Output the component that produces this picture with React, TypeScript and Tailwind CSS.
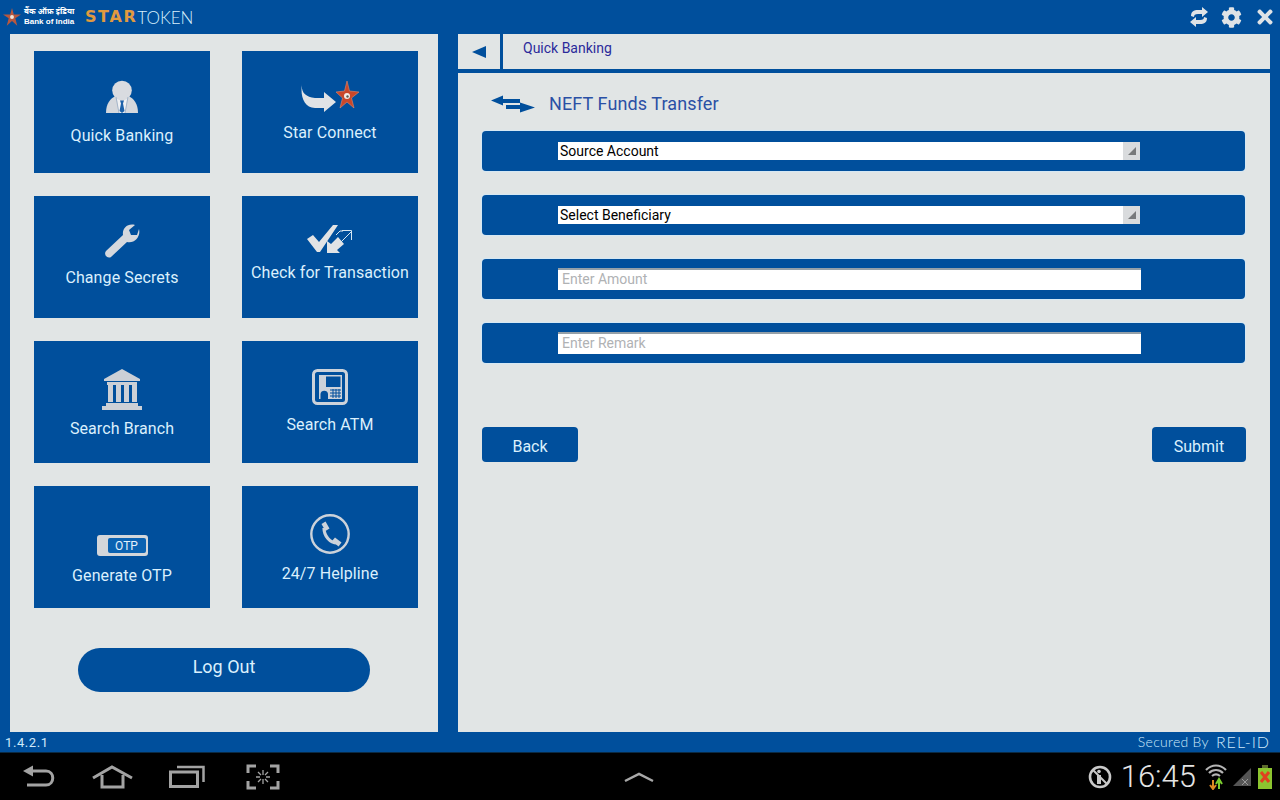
import React from "react";
import { FaCog, FaTimes } from "react-icons/fa";

const roboto = "font-['Roboto',sans-serif]";

function Star({ size = 24, fill = "#c8452b" }: { size?: number; fill?: string }) {
  return (
    <svg width={size} height={size} viewBox="0 0 24 24" className="shrink-0">
      <path d="M12 0 L14.4 8.6 L24 8.8 L16.4 13.8 L19 23.5 L12 17.4 L5 23.5 L7.6 13.8 L0 8.8 L9.6 8.6 Z" fill={fill} />
      <circle cx="12" cy="12" r="2.6" fill="#f1e4dc" />
    </svg>
  );
}

const PersonIcon = () => (
  <svg width="34" height="34" viewBox="0 0 34 34">
    <path d="M1 33 C1 24 5 18 11 16 H23 C29 18 33 24 33 33 Z" fill="#d5d8dd" />
    <circle cx="17" cy="10.5" r="9.8" fill="#d9dbe0" />
    <path d="M12 19 L17 21 L22 19 L20 33 H14 Z" fill="#f0f1f3" />
    <path d="M15 20.5 H19 L18 23.5 L19.5 31 L17 33 L14.5 31 L16 23.5 Z" fill="#1d62aa" />
    <path d="M11 17 L14 33 M23 17 L20 33" stroke="#8ea5c0" strokeWidth="0.7" />
  </svg>
);

const ConnectIcon = () => (
  <svg width="58" height="32" viewBox="0 0 58 32">
    <path d="M1 3 C0 11 4 16 14 17 L23 17 L23 11 L35 21 L23 31 L23 27 L14 27 C3 27 -1 15 1 3 Z" fill="#e0e3e6" />
    <path d="M46 0 L48.5 10 L58 11 L50.5 17 L53 27 L46 21 L39 27 L41.5 17 L35 11 L43.5 10 Z" fill="#c9472a" stroke="#e58a6a" strokeWidth="0.6" />
    <circle cx="46" cy="15" r="3" fill="#f3ece6" />
    <circle cx="46.5" cy="15.5" r="1.2" fill="#5a5a50" />
  </svg>
);

const WrenchIcon = () => (
  <svg width="36" height="34" viewBox="0 0 36 34">
    <path d="M2 27 L19 11 C18 5 23 -1 31 1 L25 6 L27 11 L33 11 L35 5 C37 13 30 20 23 18 L7 33 C4 35 -1 31 2 27 Z" fill="#d5d8dd" />
  </svg>
);

const CheckIcon = () => (
  <svg width="46" height="30" viewBox="0 0 46 30">
    <path d="M0 15 L6 11 L12 18 L26 1 L31 1 L13 28 L10 28 Z" fill="#e1e3e5" />
    <path d="M20 29 L20 17 L24 20 L31 13 L37 20 L30 26 L33 29 Z" fill="#e1e3e5" />
    <path d="M33 19 L44 8 M35 6.5 L44.5 6.5 L44.5 16 M29 11 L33 7 L36 7" stroke="#d5e6f2" strokeWidth="1" fill="none" />
  </svg>
);

const BankIcon = () => (
  <svg width="40" height="41" viewBox="0 0 40 41">
    <path d="M20 0 L38 10 L38 12 L2 12 L2 10 Z" fill="#ccd0d6" />
    <path d="M5 13 H35 V16 H5 Z" fill="#ccd0d6" />
    <path d="M6 16 H11 V33 H6 Z M14 16 H19 V33 H14 Z M22 16 H27 V33 H22 Z M30 16 H35 V33 H30 Z" fill="#ccd0d6" />
    <path d="M4 34 H36 V37 H40 V41 H0 V37 H4 Z" fill="#ccd0d6" />
  </svg>
);

const AtmIcon = () => (
  <svg width="36" height="36" viewBox="0 0 36 36">
    <rect x="1.5" y="1.5" width="33" height="33" rx="4" fill="none" stroke="#ccd2da" strokeWidth="3" />
    <path d="M7 6 H30 V30 H7 Z" fill="#ccd2da" />
    <rect x="14" y="7.5" width="14.5" height="10.5" fill="#004f9c" />
    <path d="M8.5 30 V25 C8.5 20.5 16 20.5 16 25 V30 Z" fill="#004f9c" />
    <path d="M18 21 H29 M18 24 H29 M18 27 H29" stroke="#004f9c" strokeWidth="1.1" />
    <path d="M21 20 V29 M24 20 V29 M27 20 V29" stroke="#004f9c" strokeWidth="1" />
  </svg>
);

const OtpIcon = () => (
  <div className={`w-[51px] h-[21px] rounded-[3px] bg-[#d3d6da] flex items-center justify-end pr-[1px] ${roboto}`}>
    <div className="w-[38px] h-[15px] rounded-[2px] bg-[#0a62b2] mr-[1px] flex items-center justify-center text-[12px] leading-none text-[#e4f1fb]">OTP</div>
  </div>
);

const PhoneIcon = () => (
  <svg width="40" height="40" viewBox="0 0 40 40">
    <circle cx="20" cy="20" r="18.7" fill="none" stroke="#ccd2da" strokeWidth="2.4" />
    <path d="M14 14 C14 22 20 29 27 29" fill="none" stroke="#ccd2da" strokeWidth="3.2" />
    <path d="M11.5 10 L15.5 7.5 L19.5 14.5 L15.5 17 Z" fill="#ccd2da" />
    <path d="M22 27 L25 23.5 L31.5 28.5 L28.5 32.5 Z" fill="#ccd2da" />
  </svg>
);

function Tile({ label, pt, mt, icon }: { label: string; pt: string; mt: string; icon: React.ReactNode }) {
  return (
    <div className={`h-[122px] bg-[#004f9c] flex flex-col items-center ${pt}`}>
      <div className="flex justify-center">{icon}</div>
      <div className={`${mt} text-[16px] leading-[20px] tracking-[0.1px] text-[#dbf0fd] whitespace-nowrap ${roboto}`}>{label}</div>
    </div>
  );
}

function Row({ children }: { children: React.ReactNode }) {
  return (
    <div className="h-[40px] rounded-[4px] bg-[#004f9c] shadow-[0_0_1px_1px_#d4e8f5] pl-[76px] flex items-center">{children}</div>
  );
}

function Select({ label }: { label: string }) {
  return (
    <div className={`w-[582px] h-[18px] bg-white flex items-center justify-between pl-[2px] text-[14px] text-black ${roboto}`}>
      <span>{label}</span>
      <div className="w-[17px] h-[18px] bg-[#d9dbdd] flex items-center justify-center">
        <svg width="10" height="10" viewBox="0 0 10 10"><path d="M9 1 V9 H1 Z" fill="#77797b" /></svg>
      </div>
    </div>
  );
}

function Input({ placeholder }: { placeholder: string }) {
  return (
    <div className={`w-[583px] h-[22px] mb-[1px] bg-white border-t-2 border-t-[#95a0a8] flex items-center pl-[4px] text-[14px] text-[#b0b2b4] ${roboto}`}>
      {placeholder}
    </div>
  );
}

export default function App() {
  return (
    <div className="w-[1280px] h-[800px] overflow-hidden flex flex-col bg-[#004f9c]">
      <header className="h-[34px] flex items-center justify-between pl-[3px] pr-[4px]">
        <div className="flex items-center">
          <Star size={18} fill="#b8583f" />
          <div className="ml-[3px] w-[60px] font-['Liberation_Sans','Noto_Sans',sans-serif] text-white">
            <div className="text-[8px] leading-[10px] font-bold whitespace-nowrap">बैंक ऑफ़ इंडिया</div>
            <div className="text-[8px] leading-[10px] font-bold whitespace-nowrap">Bank of India</div>
          </div>
          <span className="ml-[1px] font-['DejaVu_Sans',sans-serif] font-bold text-[16px] leading-none text-[#e09a3f] tracking-[1.6px]">STAR</span>
          <span className="font-['Lato',sans-serif] font-light text-[17px] leading-none text-[#d8effc]">TOKEN</span>
        </div>
        <div className="flex items-center gap-[12px] text-[#dfe3e6]">
          <svg width="20" height="20" viewBox="0 0 20 20">
            <path d="M2 9 C2 3 7 3 10 3 L13 3 L13 0 L19 5 L13 10 L13 7 L9 7 C6 7 5 8 5 10 Z" fill="#dfe3e6" />
            <path d="M18 11 C18 17 13 17 10 17 L7 17 L7 20 L1 15 L7 10 L7 13 L11 13 C14 13 15 12 15 10 Z" fill="#dfe3e6" />
          </svg>
          <FaCog size={21} />
          <FaTimes size={22} />
        </div>
      </header>

      <main className="h-[698px] flex gap-[20px] px-[10px]">
        <section className="w-[428px] bg-[#e1e5e5] px-[24px] pt-[17px]">
          <div className="grid grid-cols-[176px_176px] gap-x-[32px] gap-y-[23px]">
            <Tile label="Quick Banking" pt="pt-[29px]" mt="mt-[12px]" icon={<PersonIcon />} />
            <Tile label="Star Connect" pt="pt-[30px]" mt="mt-[10px]" icon={<ConnectIcon />} />
            <Tile label="Change Secrets" pt="pt-[28px]" mt="mt-[10px]" icon={<WrenchIcon />} />
            <Tile label="Check for Transaction" pt="pt-[28px]" mt="mt-[9px]" icon={<CheckIcon />} />
            <Tile label="Search Branch" pt="pt-[28px]" mt="mt-[9px]" icon={<BankIcon />} />
            <Tile label="Search ATM" pt="pt-[28px]" mt="mt-[10px]" icon={<AtmIcon />} />
            <Tile label="Generate OTP" pt="pt-[49px]" mt="mt-[10px]" icon={<OtpIcon />} />
            <Tile label="24/7 Helpline" pt="pt-[28px]" mt="mt-[10px]" icon={<PhoneIcon />} />
          </div>
          <div className={`mt-[40px] mx-[44px] h-[44px] rounded-full bg-[#004f9c] flex justify-center pt-[8px] text-[18px] leading-[22px] text-[#dbf0fd] ${roboto}`}>
            Log Out
          </div>
        </section>

        <section className="w-[812px] bg-[#e1e5e5] flex flex-col">
          <div className="h-[39px] flex border-b-[4px] border-b-[#004f9c]">
            <div className="w-[45px] border-r-[3px] border-r-[#004f9c] flex items-center justify-center">
              <svg width="14" height="12" viewBox="0 0 14 12"><path d="M0 6 L14 0 V12 Z" fill="#004f9c" /></svg>
            </div>
            <div className={`pl-[20px] pt-[4px] text-[14px] leading-[20px] text-[#2b2a9b] ${roboto}`}>Quick Banking</div>
          </div>
          <div className="h-[58px] flex items-center pl-[32px] pt-[4px]">
            <svg width="46" height="18" viewBox="0 0 46 18">
              <path d="M1 5.5 L13 0.5 V4 H30 V8 H13 V10.5 Z" fill="#004f9c" />
              <path d="M45 12.5 L30 17.5 V14 H16 V10 H30 V7.5 Z" fill="#004f9c" />
            </svg>
            <span className={`ml-[13px] text-[18px] leading-[24px] tracking-[0.1px] text-[#2a50a5] ${roboto}`}>NEFT Funds Transfer</span>
          </div>
          <div className="mx-[24px] flex flex-col gap-[24px] w-[763px]">
            <Row><Select label="Source Account" /></Row>
            <Row><Select label="Select Beneficiary" /></Row>
            <Row><Input placeholder="Enter Amount" /></Row>
            <Row><Input placeholder="Enter Remark" /></Row>
          </div>
          <div className={`mt-[64px] mx-[24px] w-[764px] flex justify-between text-[16px] text-[#dbf0fd] ${roboto}`}>
            <div className="w-[96px] h-[35px] rounded-[4px] bg-[#004f9c] flex items-center justify-center pt-[5px]">Back</div>
            <div className="w-[94px] h-[35px] rounded-[4px] bg-[#004f9c] flex items-center justify-center pt-[5px]">Submit</div>
          </div>
        </section>
      </main>

      <div className="h-[20px] flex items-center justify-between pl-[5px] pr-[10px] text-[#cfeafb]">
        <span className={`text-[13px] leading-none tracking-[0.6px] ${roboto}`}>1.4.2.1</span>
        <span className="font-['Lato',sans-serif] font-light text-[14px] leading-none tracking-[0.3px] flex items-center whitespace-nowrap">
          <span>Secured By</span>
          <span className="ml-[7px] text-[16px] tracking-[1px]">REL-ID</span>
        </span>
      </div>

      <nav className="h-[48px] bg-black border-t border-t-[#0a2a44] flex items-center relative">
        <div className="flex items-center text-[#a3a3a3] pl-[22px] w-[600px]">
          <svg width="34" height="24" viewBox="0 0 34 24" fill="none">
            <path d="M11 0.5 L1 6 L11 11.5 Z" fill="#a3a3a3" />
            <path d="M9 6 H24 C33 6 33 20 24 20 H5" stroke="#a3a3a3" strokeWidth="3" />
          </svg>
          <svg width="42" height="24" viewBox="0 0 42 24" fill="none" className="ml-[36px]">
            <path d="M1 13 L20 2 L40 13" stroke="#a3a3a3" strokeWidth="3" />
            <path d="M10 10 V22 H31 V10" stroke="#a3a3a3" strokeWidth="3" />
          </svg>
          <svg width="36" height="24" viewBox="0 0 36 24" fill="none" className="ml-[35px]">
            <rect x="1.5" y="7" width="27" height="14.5" stroke="#a3a3a3" strokeWidth="3" />
            <path d="M8 2 H34.5 V17" stroke="#a3a3a3" strokeWidth="2.5" />
          </svg>
          <svg width="34" height="26" viewBox="0 0 34 26" fill="none" className="ml-[41px]">
            <path d="M10 2 H2 V9 M24 2 H32 V9 M10 24 H2 V17 M24 24 H32 V17" stroke="#a3a3a3" strokeWidth="3" />
            <path d="M17 6 V11 M17 15 V20 M10 13 H14 M20 13 H24 M12 8 L15 11 M22 8 L19 11 M12 18 L15 15 M22 18 L19 15" stroke="#a3a3a3" strokeWidth="1.3" />
          </svg>
        </div>
        <svg width="32" height="12" viewBox="0 0 32 12" fill="none" className="ml-[23px]">
          <path d="M2 10 L16 3 L30 10" stroke="#a8a8a8" strokeWidth="2.5" />
        </svg>
        <div className="ml-auto flex items-center pr-[8px]">
          <svg width="24" height="24" viewBox="0 0 24 24" fill="none">
            <circle cx="12" cy="12" r="10" stroke="#c9c9c9" strokeWidth="2.6" />
            <path d="M5 5 L19 19" stroke="#c9c9c9" strokeWidth="2" />
            <circle cx="11" cy="6.5" r="1.8" fill="#c9c9c9" />
            <path d="M9 10 H13 V19 H9 Z" fill="#c9c9c9" />
          </svg>
          <span className="ml-[9px] font-['Roboto',sans-serif] font-light text-[31px] leading-none text-[#e4e4e4]">16:45</span>
          <svg width="24" height="26" viewBox="0 0 24 26" fill="none" className="ml-[8px]">
            <path d="M2 6 C8 0 16 0 22 6 M5 9 C9 5 15 5 19 9 M8 12 C10.5 10 13.5 10 16 12" stroke="#b5b5b5" strokeWidth="2.2" />
            <path d="M9 16 V24 M6 21 L9 25 L12 21" stroke="#dd8a22" strokeWidth="2" />
            <path d="M15 25 V17 M12 20 L15 15 L18 20" stroke="#7ccf2e" strokeWidth="2" />
          </svg>
          <svg width="20" height="20" viewBox="0 0 20 20" className="ml-[4px]">
            <path d="M19 1 V19 H1 Z" fill="#555555" />
            <path d="M10 12 L16 18 M16 12 L10 18" stroke="#9a9a9a" strokeWidth="1" />
          </svg>
          <svg width="14" height="24" viewBox="0 0 14 24" className="ml-[6px]">
            <rect x="4" y="0" width="6" height="3" fill="#5d6b2c" />
            <rect x="0" y="3" width="14" height="21" fill="#8cc42f" />
            <path d="M3 7 L11 17 M11 7 L3 17" stroke="#e0401f" strokeWidth="3" />
          </svg>
        </div>
      </nav>
    </div>
  );
}
